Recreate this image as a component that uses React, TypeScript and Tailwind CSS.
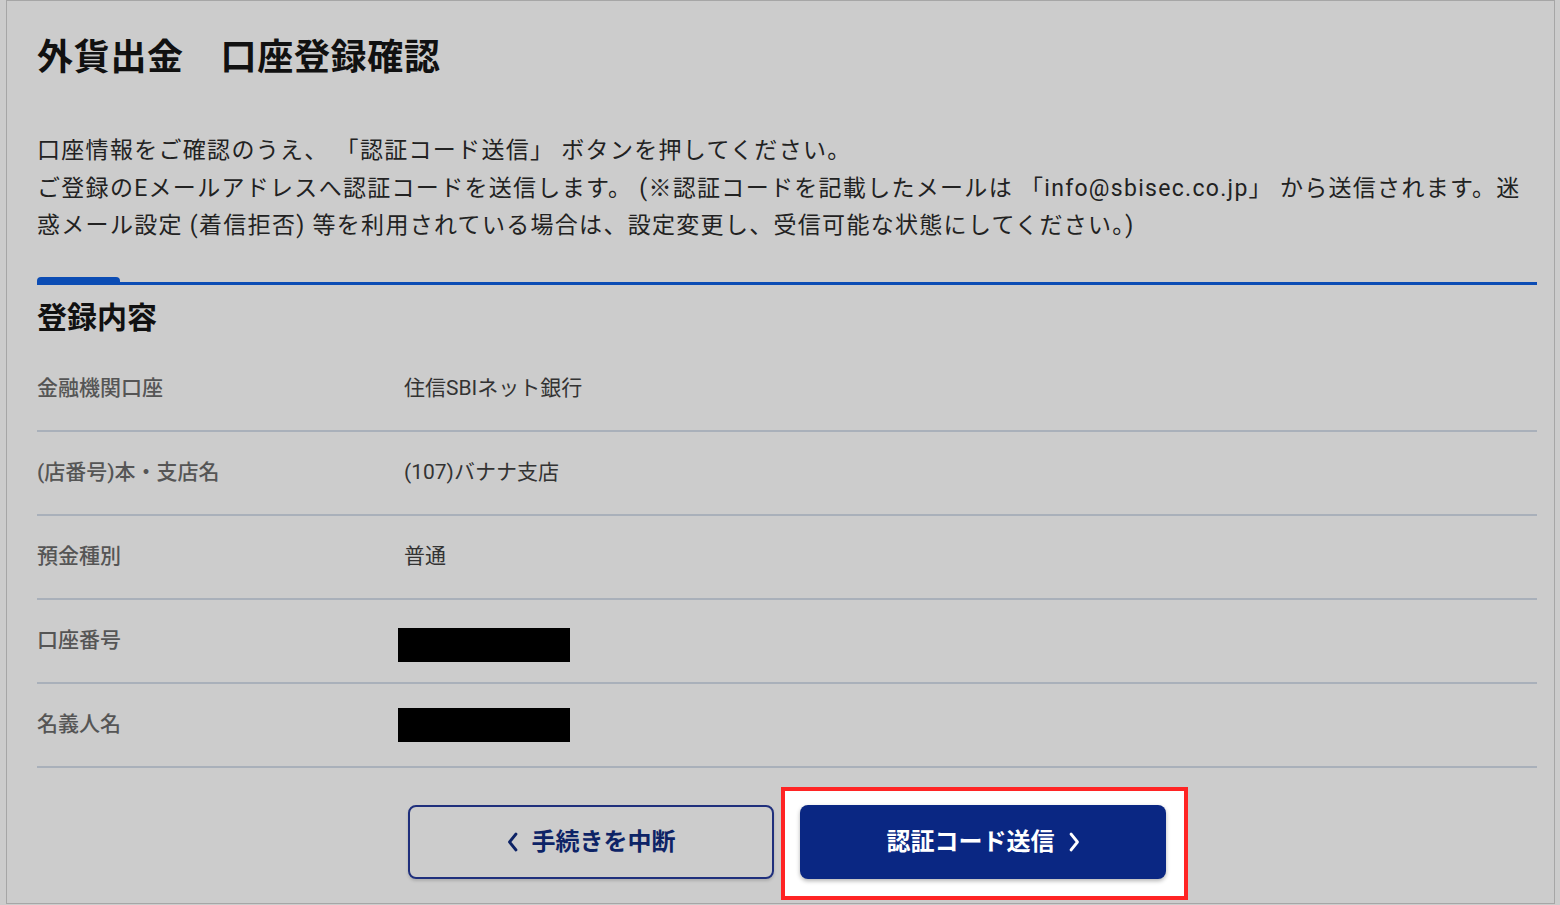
const rows: { label: string; value: string | null }[] = [
  { label: "金融機関口座", value: "住信SBIネット銀行" },
  { label: "(店番号)本・支店名", value: "(107)バナナ支店" },
  { label: "預金種別", value: "普通" },
  { label: "口座番号", value: null },
  { label: "名義人名", value: null },
];

function Chevron({ dir }: { dir: "left" | "right" }) {
  return (
    <svg width="11" height="20" viewBox="0 0 11 20" fill="none" className="shrink-0">
      <polyline
        points={dir === "left" ? "9,2 2.5,10 9,18" : "2,2 8.5,10 2,18"}
        stroke="currentColor"
        strokeWidth="2.8"
        strokeLinecap="round"
        strokeLinejoin="round"
      />
    </svg>
  );
}

export default function App() {
  return (
    <div className="w-[1560px] h-[905px] bg-[#cccccc] font-['Roboto','Noto_Sans_CJK_JP',sans-serif] overflow-hidden">
      <div className="ml-[6px] w-[1549px] h-[904px] border border-[#a6a6a6] pl-[30px] pr-[17px] pt-[33px]">
        {/* タイトル */}
        <h1 className="text-[36px] leading-[48px] font-bold tracking-[0.7px] text-[#111]">外貨出金　口座登録確認</h1>

        {/* 説明文 */}
        <p className="mt-[50px] text-[23px] leading-[37.5px] tracking-[1.3px] text-[#222] [text-spacing-trim:space-all]">
          口座情報をご確認のうえ、 「認証コード送信」 ボタンを押してください。
          <br />
          ご登録のEメールアドレスへ認証コードを送信します。 (※認証コードを記載したメールは 「info@sbisec.co.jp」 から送信されます。迷
          <br />
          惑メール設定 (着信拒否) 等を利用されている場合は、設定変更し、受信可能な状態にしてください<span className="[text-spacing-trim:normal]">。)</span>
        </p>

        {/* タブ線 */}
        <div className="mt-[32px] relative h-[8px]">
          <div className="absolute left-0 top-0 w-[83px] h-[8px] bg-[#0b4cb4] rounded-t-[4px]" />
          <div className="absolute left-0 right-0 bottom-0 h-[3px] bg-[#0b4cb4]" />
        </div>

        <h2 className="mt-[13px] mb-[10px] text-[30px] leading-[40px] font-bold text-[#111]">登録内容</h2>

        {/* 登録内容テーブル */}
        <div>
          {rows.map((r, i) => (
            <div key={r.label} className="h-[84px] flex items-center border-b-2 border-[#a9b0ba]">
              <div className="w-[367px] text-[21px] font-medium text-[#555]">{r.label}</div>
              {r.value ? (
                <div className="text-[21px] text-[#333]">{r.value}</div>
              ) : (
                <div className={`-ml-[6px] w-[172px] h-[34px] bg-black ${i === 3 ? "mt-[8px]" : ""}`} />
              )}
            </div>
          ))}
        </div>

        {/* ボタン */}
        <div className="mt-[37px] flex justify-center gap-[26px]">
          <button className="w-[366px] h-[74px] rounded-[8px] border-2 border-[#1f2f7c] shadow-[0_2px_3px_rgba(0,0,0,0.15)] flex items-center justify-center gap-[14px] text-[24px] font-bold text-[#0d2366]">
            <Chevron dir="left" />
            手続きを中断
          </button>
          <div className="relative">
            <div className="absolute -left-[19px] -top-[18px] w-[407px] h-[113px] border-4 border-[#ff2424] bg-white" />
            <button className="relative w-[366px] h-[74px] rounded-[8px] bg-[#0a2783] shadow-[0_2px_4px_rgba(0,0,0,0.3)] flex items-center justify-center gap-[14px] text-[24px] font-bold text-white">
              認証コード送信
              <Chevron dir="right" />
            </button>
          </div>
        </div>
      </div>
    </div>
  );
}
